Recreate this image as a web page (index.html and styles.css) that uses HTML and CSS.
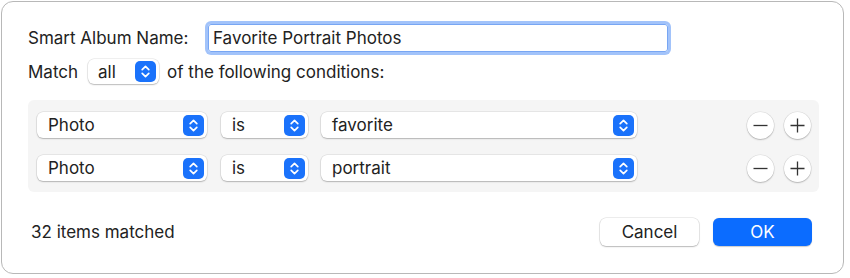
FILE: index.html
```html
<!DOCTYPE html>
<html lang="en">
<head>
  <meta charset="UTF-8">
  <title>Smart Album</title>
  <link rel="stylesheet" href="styles.css">
</head>
<body>
  <div class="dialog">
    <!-- Album name -->
    <div class="name-row">
      <span class="name-label">Smart Album Name:</span>
      <div class="field">Favorite Portrait Photos</div>
    </div>

    <!-- Match selector -->
    <div class="match-row">
      <span>Match</span>
      <div class="popup popup-all">
        <span>all</span>
        <svg class="stepper" width="21" height="21" viewBox="0 0 21 21"><rect width="21" height="21" rx="5" fill="#1a72fb"/><path d="M7.2 8.6 L10.5 5.4 L13.8 8.6 M7.2 12.4 L10.5 15.6 L13.8 12.4" fill="none" stroke="#fff" stroke-width="1.7" stroke-linecap="round" stroke-linejoin="round"/></svg>
      </div>
      <span>of the following conditions:</span>
    </div>

    <!-- Conditions -->
    <div class="conditions">
      <div class="rule">
        <div class="popup popup-field">
          <span>Photo</span>
          <svg class="stepper" width="21" height="21" viewBox="0 0 21 21"><rect width="21" height="21" rx="5" fill="#1a72fb"/><path d="M7.2 8.6 L10.5 5.4 L13.8 8.6 M7.2 12.4 L10.5 15.6 L13.8 12.4" fill="none" stroke="#fff" stroke-width="1.7" stroke-linecap="round" stroke-linejoin="round"/></svg>
        </div>
        <div class="popup popup-op">
          <span>is</span>
          <svg class="stepper" width="21" height="21" viewBox="0 0 21 21"><rect width="21" height="21" rx="5" fill="#1a72fb"/><path d="M7.2 8.6 L10.5 5.4 L13.8 8.6 M7.2 12.4 L10.5 15.6 L13.8 12.4" fill="none" stroke="#fff" stroke-width="1.7" stroke-linecap="round" stroke-linejoin="round"/></svg>
        </div>
        <div class="popup popup-value">
          <span>favorite</span>
          <svg class="stepper" width="21" height="21" viewBox="0 0 21 21"><rect width="21" height="21" rx="5" fill="#1a72fb"/><path d="M7.2 8.6 L10.5 5.4 L13.8 8.6 M7.2 12.4 L10.5 15.6 L13.8 12.4" fill="none" stroke="#fff" stroke-width="1.7" stroke-linecap="round" stroke-linejoin="round"/></svg>
        </div>
        <button class="round-btn remove"><svg width="15" height="15" viewBox="0 0 15 15"><path d="M0.5 7.5 H14.5" stroke="#333" stroke-width="1.3"/></svg></button>
        <button class="round-btn"><svg width="15" height="15" viewBox="0 0 15 15"><path d="M0.5 7.5 H14.5 M7.5 0.5 V14.5" stroke="#333" stroke-width="1.3"/></svg></button>
      </div>
      <div class="rule">
        <div class="popup popup-field">
          <span>Photo</span>
          <svg class="stepper" width="21" height="21" viewBox="0 0 21 21"><rect width="21" height="21" rx="5" fill="#1a72fb"/><path d="M7.2 8.6 L10.5 5.4 L13.8 8.6 M7.2 12.4 L10.5 15.6 L13.8 12.4" fill="none" stroke="#fff" stroke-width="1.7" stroke-linecap="round" stroke-linejoin="round"/></svg>
        </div>
        <div class="popup popup-op">
          <span>is</span>
          <svg class="stepper" width="21" height="21" viewBox="0 0 21 21"><rect width="21" height="21" rx="5" fill="#1a72fb"/><path d="M7.2 8.6 L10.5 5.4 L13.8 8.6 M7.2 12.4 L10.5 15.6 L13.8 12.4" fill="none" stroke="#fff" stroke-width="1.7" stroke-linecap="round" stroke-linejoin="round"/></svg>
        </div>
        <div class="popup popup-value">
          <span>portrait</span>
          <svg class="stepper" width="21" height="21" viewBox="0 0 21 21"><rect width="21" height="21" rx="5" fill="#1a72fb"/><path d="M7.2 8.6 L10.5 5.4 L13.8 8.6 M7.2 12.4 L10.5 15.6 L13.8 12.4" fill="none" stroke="#fff" stroke-width="1.7" stroke-linecap="round" stroke-linejoin="round"/></svg>
        </div>
        <button class="round-btn remove"><svg width="15" height="15" viewBox="0 0 15 15"><path d="M0.5 7.5 H14.5" stroke="#333" stroke-width="1.3"/></svg></button>
        <button class="round-btn"><svg width="15" height="15" viewBox="0 0 15 15"><path d="M0.5 7.5 H14.5 M7.5 0.5 V14.5" stroke="#333" stroke-width="1.3"/></svg></button>
      </div>
    </div>

    <!-- Footer -->
    <div class="footer">
      <span class="count">32 items matched</span>
      <div class="buttons">
        <button class="btn">Cancel</button>
        <button class="btn btn-primary">OK</button>
      </div>
    </div>
  </div>
</body>
</html>
```

FILE: styles.css
```css
body {
  margin: 0;
  padding: 0;
  background-color: #fff;
  font-family: Inter, "Liberation Sans", sans-serif;
  font-size: 17px;
  color: #222;
}
.dialog {
  box-sizing: border-box;
  width: 843px;
  height: 273px;
  margin: 1px 0 0 1px;
  padding: 22px 24px 0 26px;
  border: 1px solid #b8b8b8;
  border-radius: 12px;
  background: #fff;
  display: flex;
  flex-direction: column;
}
.name-row {
  display: flex;
  align-items: center;
  height: 28px;
}
.name-label {
  width: 180px;
}
.field {
  box-sizing: border-box;
  width: 460px;
  height: 28px;
  line-height: 26px;
  padding-left: 4px;
  border: 1px solid #78a6f3;
  border-radius: 3px;
  box-shadow: 0 0 0 3px #a2c3fa;
}
.match-row {
  display: flex;
  align-items: center;
  height: 25px;
  margin-top: 7px;
}
.popup {
  box-sizing: border-box;
  display: flex;
  align-items: center;
  justify-content: space-between;
  padding: 0 3px 0 11px;
  background: #fff;
  border-radius: 6px;
  box-shadow: 0 0 0 0.5px rgba(0, 0, 0, 0.12), 0 1px 1.5px rgba(0, 0, 0, 0.22);
}
.popup-all {
  width: 71px;
  height: 25px;
  margin: 0 8px 0 10px;
  padding-left: 10px;
}
.stepper {
  display: block;
}
.conditions {
  display: flex;
  flex-direction: column;
  gap: 17px;
  margin-top: 16px;
  padding: 12px 8px 11px 9px;
  background: #f5f5f5;
  border-radius: 6px;
}
.rule {
  display: flex;
  align-items: center;
  height: 26px;
}
.rule .popup {
  height: 26px;
}
.popup-field {
  width: 170px;
}
.popup-op {
  width: 87px;
  margin-left: 14px;
}
.popup-value {
  width: 316px;
  margin-left: 13px;
}
.round-btn {
  width: 27px;
  height: 27px;
  padding: 0;
  margin-left: 10px;
  border: none;
  border-radius: 50%;
  background: #fff;
  box-shadow: 0 0 0 0.5px rgba(0, 0, 0, 0.1), 0 1px 1.5px rgba(0, 0, 0, 0.22);
  display: flex;
  align-items: center;
  justify-content: center;
}
.round-btn.remove {
  margin-left: auto;
}
.footer {
  display: flex;
  align-items: center;
  justify-content: space-between;
  height: 28px;
  margin-top: 26px;
  padding: 0 7px 0 3px;
}
.buttons {
  display: flex;
  gap: 14px;
}
.btn {
  width: 99px;
  height: 28px;
  padding: 0;
  border: none;
  border-radius: 6px;
  font-family: inherit;
  font-size: 17px;
  color: #222;
  background: #fff;
  box-shadow: 0 0 0 0.5px rgba(0, 0, 0, 0.14), 0 1px 1.5px rgba(0, 0, 0, 0.22);
}
.btn-primary {
  background: #0b6cff;
  color: #fff;
  box-shadow: 0 0.5px 1px rgba(0, 0, 0, 0.2);
}
```
